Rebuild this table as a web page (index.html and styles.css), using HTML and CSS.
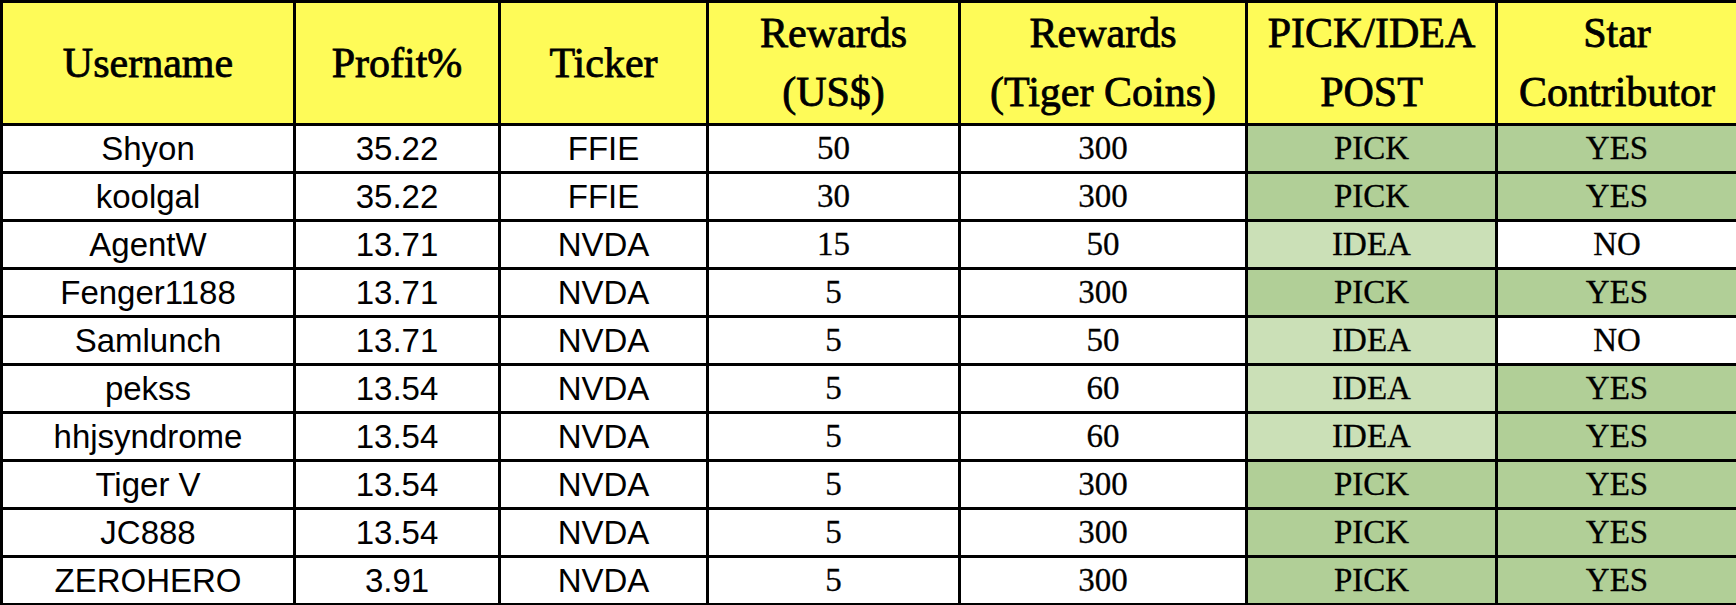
FILE: index.html
```html
<!DOCTYPE html>
<html lang="en">
<head>
<meta charset="utf-8">
<title>Rewards</title>
<link rel="stylesheet" href="styles.css">
</head>
<body>
<table class="board">
  <colgroup>
    <col class="c-user"><col class="c-profit"><col class="c-ticker"><col class="c-usd"><col class="c-coins"><col class="c-post"><col class="c-star">
  </colgroup>
  <thead>
    <tr>
      <th>Username</th>
      <th>Profit%</th>
      <th>Ticker</th>
      <th>Rewards<br>(US$)</th>
      <th>Rewards<br>(Tiger Coins)</th>
      <th>PICK/IDEA<br>POST</th>
      <th>Star<br>Contributor</th>
    </tr>
  </thead>
  <tbody>
    <tr><td class="sans">Shyon</td><td class="sans">35.22</td><td class="sans">FFIE</td><td class="serif">50</td><td class="serif">300</td><td class="serif pick">PICK</td><td class="serif yes">YES</td></tr>
    <tr><td class="sans">koolgal</td><td class="sans">35.22</td><td class="sans">FFIE</td><td class="serif">30</td><td class="serif">300</td><td class="serif pick">PICK</td><td class="serif yes">YES</td></tr>
    <tr><td class="sans">AgentW</td><td class="sans">13.71</td><td class="sans">NVDA</td><td class="serif">15</td><td class="serif">50</td><td class="serif idea">IDEA</td><td class="serif">NO</td></tr>
    <tr><td class="sans">Fenger1188</td><td class="sans">13.71</td><td class="sans">NVDA</td><td class="serif">5</td><td class="serif">300</td><td class="serif pick">PICK</td><td class="serif yes">YES</td></tr>
    <tr><td class="sans">Samlunch</td><td class="sans">13.71</td><td class="sans">NVDA</td><td class="serif">5</td><td class="serif">50</td><td class="serif idea">IDEA</td><td class="serif">NO</td></tr>
    <tr><td class="sans">pekss</td><td class="sans">13.54</td><td class="sans">NVDA</td><td class="serif">5</td><td class="serif">60</td><td class="serif idea">IDEA</td><td class="serif yes">YES</td></tr>
    <tr><td class="sans">hhjsyndrome</td><td class="sans">13.54</td><td class="sans">NVDA</td><td class="serif">5</td><td class="serif">60</td><td class="serif idea">IDEA</td><td class="serif yes">YES</td></tr>
    <tr><td class="sans">Tiger V</td><td class="sans">13.54</td><td class="sans">NVDA</td><td class="serif">5</td><td class="serif">300</td><td class="serif pick">PICK</td><td class="serif yes">YES</td></tr>
    <tr><td class="sans">JC888</td><td class="sans">13.54</td><td class="sans">NVDA</td><td class="serif">5</td><td class="serif">300</td><td class="serif pick">PICK</td><td class="serif yes">YES</td></tr>
    <tr><td class="sans">ZEROHERO</td><td class="sans">3.91</td><td class="sans">NVDA</td><td class="serif">5</td><td class="serif">300</td><td class="serif pick">PICK</td><td class="serif yes">YES</td></tr>
  </tbody>
</table>
</body>
</html>
```

FILE: styles.css
```css
html, body {
  margin: 0;
  padding: 0;
  background: #ffffff;
}

.board {
  border-collapse: collapse;
  table-layout: fixed;
  width: 1736px;
  color: #000;
}

.c-user { width: 293px; }
.c-profit { width: 205px; }
.c-ticker { width: 208px; }
.c-usd { width: 252px; }
.c-coins { width: 287px; }
.c-post { width: 250px; }
.c-star { width: 241px; }

.board th,
.board td {
  border: 3px solid #000;
  padding: 0;
  text-align: center;
  vertical-align: middle;
  white-space: nowrap;
}

.board th {
  background: #fefb58;
  font-family: "Liberation Serif", "Times New Roman", serif;
  font-weight: normal;
  font-size: 42px;
  line-height: 59px;
  height: 120px;
  -webkit-text-stroke: 0.8px #000;
}

.board td {
  height: 45px;
  line-height: 45px;
}

.sans {
  font-family: "Liberation Sans", Arial, sans-serif;
  font-size: 33px;
}

.serif {
  font-family: "Liberation Serif", "Times New Roman", serif;
  font-size: 33px;
  -webkit-text-stroke: 0.3px #000;
}

.pick,
.yes {
  background: #b1cf97;
}

.idea {
  background: #cbe0b7;
}
```
